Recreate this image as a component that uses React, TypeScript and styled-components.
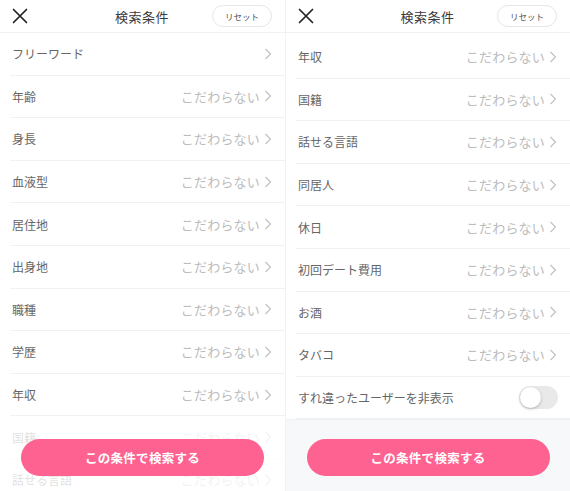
import React from "react";
import styled, { createGlobalStyle } from "styled-components";

const Global = createGlobalStyle`
  html, body { margin: 0; padding: 0; background: #fff; }
  body { font-family: "Noto Sans CJK JP", "Noto Sans", sans-serif; }
`;

const Page = styled.div`
  display: flex;
  width: 570px;
  height: 491px;
  overflow: hidden;
`;

const Screen = styled.div<{ $divider?: boolean }>`
  position: relative;
  width: 285px;
  height: 491px;
  display: flex;
  flex-direction: column;
  overflow: hidden;
  background: #fff;
  box-sizing: border-box;
  border-left: ${(p) => (p.$divider ? "1px solid #f1f2f4" : "none")};
`;

const Header = styled.div`
  flex: 0 0 auto;
  height: 33px;
  display: grid;
  grid-template-columns: 60px 1fr 60px;
  align-items: center;
  padding: 0 13px 0 12px;
  border-bottom: 1px solid #f0f1f3;
  box-sizing: border-box;
`;

const CloseBtn = styled.div`
  display: flex;
  align-items: center;
  height: 16px;
`;

const Title = styled.div`
  text-align: center;
  font-size: 13px;
  color: #3a3a3a;
  letter-spacing: 0.5px;
`;

const ResetBtn = styled.div`
  height: 22px;
  border: 1px solid #e6e6e6;
  border-radius: 11px;
  display: flex;
  align-items: center;
  justify-content: center;
  font-size: 8.5px;
  color: #555;
  box-sizing: border-box;
`;

const List = styled.div<{ $offset?: number }>`
  display: flex;
  flex-direction: column;
  padding-top: ${(p) => p.$offset ?? 0}px;
`;

const Row = styled.div`
  height: 42.6px;
  flex: 0 0 auto;
  display: flex;
  align-items: center;
  justify-content: space-between;
  margin-left: 10px;
  padding: 0 13px 0 2px;
  border-bottom: 1px solid #f0f1f3;
  box-sizing: border-box;
`;

const Label = styled.span`
  font-size: 12px;
  color: #666;
`;

const Value = styled.span`
  display: flex;
  align-items: center;
  gap: 4px;
  font-size: 13px;
  color: #bcbcbc;
  letter-spacing: 0.2px;
`;

const Toggle = styled.div`
  position: relative;
  width: 39px;
  height: 23px;
  border-radius: 12px;
  background: #e9e9ea;
  margin-right: -1px;
`;

const Knob = styled.div`
  position: absolute;
  left: 1px;
  top: 1px;
  width: 21px;
  height: 21px;
  border-radius: 50%;
  background: #fff;
  box-shadow: 0 1px 3px rgba(0, 0, 0, 0.25);
`;

const Overlay = styled.div`
  position: absolute;
  left: 0;
  right: 0;
  bottom: 0;
  height: 75px;
  padding-top: 23px;
  box-sizing: border-box;
  background: rgba(255, 255, 255, 0.8);
  display: flex;
  justify-content: center;
`;

const Footer = styled.div`
  flex: 1 1 auto;
  background: #f7f8fa;
  border-top: 1px solid #eef0f3;
  padding-top: 19px;
  display: flex;
  justify-content: center;
`;

const SearchBtn = styled.div`
  width: 243px;
  height: 37px;
  border-radius: 19px;
  background: #fe6290;
  color: #fff;
  font-size: 12.5px;
  font-weight: 700;
  display: flex;
  align-items: center;
  justify-content: center;
  letter-spacing: 0.3px;
`;

const CloseIcon = () => (
  <svg width="16" height="16" viewBox="0 0 16 16">
    <path d="M1.5 1.5 L14.5 14.5 M14.5 1.5 L1.5 14.5" stroke="#222" strokeWidth="1.7" strokeLinecap="round" fill="none" />
  </svg>
);

const Chevron = () => (
  <svg width="8" height="12" viewBox="0 0 8 12">
    <path d="M1.5 1 L6.5 6 L1.5 11" stroke="#c2c2c2" strokeWidth="1.2" fill="none" />
  </svg>
);

const Top = () => (
  <Header>
    <CloseBtn>
      <CloseIcon />
    </CloseBtn>
    <Title>検索条件</Title>
    <ResetBtn>リセット</ResetBtn>
  </Header>
);

const Item = ({ label, value = true }: { label: string; value?: boolean }) => (
  <Row>
    <Label>{label}</Label>
    <Value>
      {value && "こだわらない"}
      <Chevron />
    </Value>
  </Row>
);

const leftItems = ["年齢", "身長", "血液型", "居住地", "出身地", "職種", "学歴", "年収", "国籍", "話せる言語"];
const rightItems = ["年収", "国籍", "話せる言語", "同居人", "休日", "初回デート費用", "お酒", "タバコ"];

export default function App() {
  return (
    <>
      <Global />
      <Page>
        <Screen>
          <Top />
          <List>
            <Item label="フリーワード" value={false} />
            {leftItems.map((l) => (
              <Item key={l} label={l} />
            ))}
          </List>
          <Overlay>
            <SearchBtn>この条件で検索する</SearchBtn>
          </Overlay>
        </Screen>
        <Screen $divider>
          <Top />
          <List $offset={3}>
            {rightItems.map((l) => (
              <Item key={l} label={l} />
            ))}
            <Row>
              <Label>すれ違ったユーザーを非表示</Label>
              <Toggle>
                <Knob />
              </Toggle>
            </Row>
          </List>
          <Footer>
            <SearchBtn>この条件で検索する</SearchBtn>
          </Footer>
        </Screen>
      </Page>
    </>
  );
}
